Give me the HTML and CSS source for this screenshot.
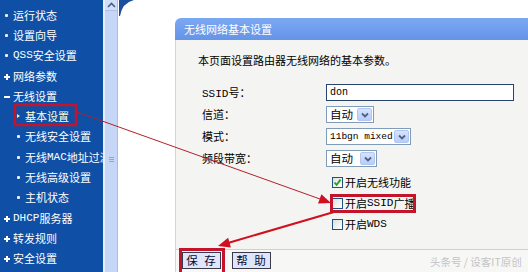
FILE: index.html
```html
<!DOCTYPE html>
<html lang="zh-CN">
<head>
<meta charset="utf-8">
<title>无线网络基本设置</title>
<link rel="stylesheet" href="styles.css">
</head>
<body>
<div class="page">
  <nav class="sidebar">
    <ul class="menu">
      <li class="item"><span class="mk dot"></span>运行状态</li>
      <li class="item"><span class="mk dot"></span>设置向导</li>
      <li class="item"><span class="mk dot"></span><span class="lat">QSS</span>安全设置</li>
      <li class="item"><span class="mk plus"></span>网络参数</li>
      <li class="item"><span class="mk minus"></span>无线设置</li>
      <li class="item sub active"><span class="mk tri"></span>基本设置</li>
      <li class="item sub"><span class="mk dot"></span>无线安全设置</li>
      <li class="item sub"><span class="mk dot"></span>无线<span class="lat">MAC</span>地址过滤</li>
      <li class="item sub"><span class="mk dot"></span>无线高级设置</li>
      <li class="item sub"><span class="mk dot"></span>主机状态</li>
      <li class="item"><span class="mk plus"></span><span class="lat">DHCP</span>服务器</li>
      <li class="item"><span class="mk plus"></span>转发规则</li>
      <li class="item"><span class="mk plus"></span>安全设置</li>
    </ul>
  </nav>
  <div class="scrollbar">
    <div class="sb-up"><svg width="9" height="6" viewBox="0 0 9 6"><path d="M1 5 L4.5 1.5 L8 5" fill="none" stroke="#4a5f86" stroke-width="1.6"/></svg></div>
    <div class="sb-track"><span class="sb-grip"></span></div>
  </div>
  <main class="content">
    <div class="topstrip">
      <svg class="corner" width="16" height="16" viewBox="0 0 16 16"><path d="M0 0 L15 0 Q3 3 1 16 L0 16 Z" fill="#1b4e9c"/></svg>
    </div>
    <div class="panelwrap">
      <section class="panel">
        <div class="phead">无线网络基本设置</div>
        <div class="pbody">
          <p class="desc">本页面设置路由器无线网络的基本参数。</p>
          <div class="form">
            <div class="row">
              <span class="lbl"><span class="lat">SSID</span>号：</span>
              <div class="input">don</div>
            </div>
            <div class="row">
              <span class="lbl">信道：</span>
              <div class="sel sel-ch"><span class="sel-text">自动</span><span class="sel-btn"><svg width="8" height="6" viewBox="0 0 8 6"><path d="M1 1.5 L4 4.5 L7 1.5" fill="none" stroke="#4d6185" stroke-width="1.8"/></svg></span></div>
            </div>
            <div class="row">
              <span class="lbl">模式：</span>
              <div class="sel sel-mode"><span class="sel-text mono">11bgn mixed</span><span class="sel-btn"><svg width="8" height="6" viewBox="0 0 8 6"><path d="M1 1.5 L4 4.5 L7 1.5" fill="none" stroke="#4d6185" stroke-width="1.8"/></svg></span></div>
            </div>
            <div class="row">
              <span class="lbl">频段带宽：</span>
              <div class="sel sel-bw"><span class="sel-text">自动</span><span class="sel-btn"><svg width="8" height="6" viewBox="0 0 8 6"><path d="M1 1.5 L4 4.5 L7 1.5" fill="none" stroke="#4d6185" stroke-width="1.8"/></svg></span></div>
            </div>
            <div class="row crow">
              <span class="lbl"></span>
              <label class="chk"><span class="box"><svg width="9" height="9" viewBox="0 0 9 9"><path d="M1.5 4.5 L3.6 6.8 L7.6 1.6" fill="none" stroke="#21a121" stroke-width="1.8"/></svg></span>开启无线功能</label>
            </div>
            <div class="row crow">
              <span class="lbl"></span>
              <label class="chk"><span class="box"></span>开启<span class="lat">SSID</span>广播</label>
            </div>
            <div class="row crow">
              <span class="lbl"></span>
              <label class="chk"><span class="box"></span>开启<span class="lat">WDS</span></label>
            </div>
          </div>
        </div>
        <div class="pfoot">
          <button class="btn">保 存</button>
          <button class="btn">帮 助</button>
          <span class="wm">头条号 / 设客IT原创</span>
        </div>
      </section>
    </div>
  </main>
  <svg class="annot" width="528" height="272" viewBox="0 0 528 272">
    <rect x="15" y="105" width="61" height="20" fill="none" stroke="#c4142c" stroke-width="2.5"/>
    <line x1="77" y1="112" x2="320" y2="199" stroke="#b0202c" stroke-width="1"/>
    <polygon points="331,203 318,203.6 321.4,194.2" fill="#d0101e"/>
    <rect x="331.5" y="195.5" width="83" height="16" fill="none" stroke="#c4142c" stroke-width="3"/>
    <line x1="334" y1="212" x2="228" y2="243" stroke="#d0101e" stroke-width="2"/>
    <polygon points="218,246 228.1,237.8 230.9,247.4" fill="#d0101e"/>
    <rect x="180.5" y="249.5" width="43" height="30" fill="none" stroke="#c4142c" stroke-width="3"/>
  </svg>
</div>
</body>
</html>
```

FILE: styles.css
```css
* { box-sizing: border-box; }
html, body { margin: 0; padding: 0; }
body {
  width: 528px;
  height: 272px;
  overflow: hidden;
  background: #ffffff;
  font-family: "Noto Sans CJK SC", "DejaVu Sans", sans-serif;
  font-size: 11px;
  color: #000;
}
.page {
  position: relative;
  display: flex;
  width: 528px;
  height: 272px;
  overflow: hidden;
}
.lat, .mono { font-family: "Liberation Mono", "DejaVu Sans Mono", monospace; }

/* sidebar */
.sidebar {
  width: 103px;
  flex: none;
  background: #0f4fa6;
  overflow: hidden;
}
.menu {
  list-style: none;
  margin: 0;
  padding: 5px 0 0 0;
}
.item {
  display: flex;
  align-items: center;
  height: 20.3px;
  padding-left: 4px;
  color: #ffffff;
  white-space: nowrap;
  line-height: 1;
}
.item.sub { padding-left: 16px; }
.item.active { color: #ffffd8; }
.mk {
  width: 9px;
  height: 9px;
  flex: none;
  position: relative;
}
.mk.dot::before {
  content: "";
  position: absolute;
  left: 1px; top: 3px;
  width: 3px; height: 3px;
  background: #e8eefa;
  border-radius: 1px;
}
.mk.plus::before, .mk.minus::before {
  content: "";
  position: absolute;
  left: 0; top: 4px;
  width: 6px; height: 2px;
  background: #ffffff;
}
.mk.plus::after {
  content: "";
  position: absolute;
  left: 2px; top: 2px;
  width: 2px; height: 6px;
  background: #ffffff;
}
.mk.tri::before {
  content: "";
  position: absolute;
  left: 1px; top: 2px;
  border-left: 3px solid #f4f0c8;
  border-top: 2.5px solid transparent;
  border-bottom: 2.5px solid transparent;
}

/* scrollbar */
.scrollbar {
  width: 15px;
  flex: none;
  display: flex;
  flex-direction: column;
  background: #c6d6f6;
  border-left: 2px solid #e9f0fc;
  border-right: 1px solid #a9bde6;
}
.sb-up {
  height: 11px;
  display: flex;
  align-items: center;
  justify-content: center;
  background: #d2dffa;
  border-bottom: 1px solid #aebfe4;
}
.sb-track {
  flex: 1;
  display: flex;
  justify-content: center;
  padding-top: 146px;
}
.sb-grip {
  width: 5px;
  height: 5px;
  border-top: 1px solid #8ea6d6;
  border-bottom: 1px solid #8ea6d6;
  position: relative;
}
.sb-grip::after {
  content: "";
  position: absolute;
  left: 0; top: 1px;
  width: 5px; height: 1px;
  background: #8ea6d6;
}

/* content */
.content {
  flex: 1;
  display: flex;
  flex-direction: column;
  background: #ffffff;
  min-width: 0;
}
.topstrip {
  height: 18px;
  padding-left: 1px;
}
.corner { display: block; }
.panelwrap {
  flex: 1;
  padding-left: 57px;
}
.panel {
  width: 360px;
  display: flex;
  flex-direction: column;
}
.phead {
  height: 22px;
  line-height: 22px;
  padding-left: 9px;
  color: #ffffff;
  background: linear-gradient(#7ba8f2, #6594e8);
  border-radius: 6px 0 0 0;
  font-size: 11px;
}
.pbody {
  height: 209px;
  background: #f4f4f2;
  border-left: 1px solid #efcdb0;
  padding: 14px 0 0 22px;
}
.desc {
  margin: 0;
  line-height: 12px;
  height: 12px;
  font-size: 11px;
  white-space: nowrap;
}
.form {
  margin-top: 18px;
  margin-left: 4px;
  display: flex;
  flex-direction: column;
}
.row {
  display: flex;
  height: 22px;
  align-items: flex-start;
}
.lbl {
  width: 124px;
  flex: none;
  height: 17px;
  line-height: 17px;
  white-space: nowrap;
}
.input {
  width: 188px;
  height: 17px;
  border: 1px solid #27446e;
  background: #ffffff;
  padding-left: 3px;
  font-family: "Liberation Mono", "DejaVu Sans Mono", monospace;
  font-size: 10px;
  line-height: 15px;
}
.sel {
  height: 17px;
  display: flex;
  align-items: center;
  justify-content: space-between;
  border: 1px solid #7f9db9;
  background: #ffffff;
  padding: 1px;
}
.sel-ch { width: 48px; }
.sel-mode { width: 85px; }
.sel-bw { width: 51px; }
.sel-text {
  padding-left: 2px;
  font-size: 11.5px;
  line-height: 13px;
  white-space: nowrap;
}
.sel-text.mono { font-size: 9.5px; }
.sel-btn {
  width: 15px;
  height: 13px;
  display: flex;
  align-items: center;
  justify-content: center;
  background: linear-gradient(#d6e2fe, #b9cdfa);
  border: 1px solid #b3c6f2;
  border-radius: 2px;
}
.crow { height: 21px; align-items: center; }
.chk {
  display: flex;
  align-items: center;
  margin-left: 6px;
  white-space: nowrap;
  line-height: 1;
}
.box {
  width: 11px;
  height: 11px;
  border: 1px solid #1c5180;
  background: linear-gradient(135deg, #e0e0da, #ffffff);
  margin-right: 2px;
  display: flex;
  align-items: center;
  justify-content: center;
}
.pfoot {
  height: 23px;
  display: flex;
  align-items: flex-start;
  border-top: 1px solid #efc9a6;
  border-left: 1px solid #efcdb0;
  background: #f7f7f6;
  padding: 2px 0 0 6px;
}
.btn {
  width: 39px;
  height: 17px;
  margin: 0 11px 0 0;
  padding: 0;
  border: 1px solid #3a3a4a;
  background: #dfe5fa;
  font-family: "Noto Sans CJK SC", sans-serif;
  font-size: 11.5px;
  line-height: 15px;
  letter-spacing: 1px;
  word-spacing: 2px;
  color: #0a0a30;
}
.wm {
  margin-left: 148px;
  line-height: 20px;
  font-size: 10.5px;
  color: #c4c4c4;
  white-space: nowrap;
}

/* annotations */
.annot {
  position: absolute;
  left: 0;
  top: 0;
  pointer-events: none;
}
```
